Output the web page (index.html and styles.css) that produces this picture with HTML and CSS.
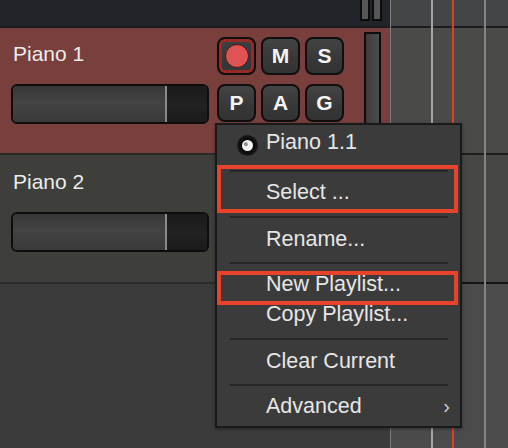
FILE: index.html
```html
<!DOCTYPE html>
<html>
<head>
<meta charset="utf-8">
<link rel="stylesheet" href="styles.css">
</head>
<body>
<div class="app">
  <div class="headers">
    <div class="topbar">
      <div class="mini-meters"><span class="mini"></span><span class="mini"></span></div>
    </div>
    <div class="track track-sel">
      <div class="track-main">
        <div class="name">Piano 1</div>
        <div class="fader"><div class="fader-fill"></div><div class="fader-thumb"></div><div class="fader-rest"></div></div>
      </div>
      <div class="btn-grid">
        <div class="btn rec"><span class="rec-dot"></span></div>
        <div class="btn">M</div>
        <div class="btn">S</div>
        <div class="btn">P</div>
        <div class="btn">A</div>
        <div class="btn">G</div>
      </div>
      <div class="meter"></div>
    </div>
    <div class="track track-2">
      <div class="track-main">
        <div class="name">Piano 2</div>
        <div class="fader"><div class="fader-fill"></div><div class="fader-thumb"></div><div class="fader-rest"></div></div>
      </div>
    </div>
    <div class="rest"></div>
  </div>
  <div class="timeline">
    <div class="tl-top"></div>
    <div class="tl-row1"></div>
    <div class="tl-row2"></div>
    <div class="tl-rest"></div>
    <div class="tl-lines">
      <span class="vl v0"></span>
      <span class="vl v1"></span>
      <span class="vl vred"></span>
      <span class="vl v2"></span>
    </div>
  </div>

  <div class="menu">
    <div class="item item-piano"><span class="radio"></span><span>Piano 1.1</span></div>
    <div class="sep"></div>
    <div class="item item-select">Select ...</div>
    <div class="sep"></div>
    <div class="item item-rename">Rename...</div>
    <div class="sep"></div>
    <div class="item item-new">New Playlist...</div>
    <div class="item item-copy">Copy Playlist...</div>
    <div class="sep"></div>
    <div class="item item-clear">Clear Current</div>
    <div class="sep"></div>
    <div class="item item-adv"><span>Advanced</span><span class="arrow">›</span></div>
  </div>
  <div class="hl hl1"></div>
  <div class="hl hl2"></div>
</div>
</body>
</html>
```
FILE: styles.css
```css
html, body {
  margin: 0;
  padding: 0;
  background: #3b3b3b;
}
.app {
  position: relative;
  display: flex;
  width: 508px;
  height: 448px;
  overflow: hidden;
  font-family: "Liberation Sans", Arial, sans-serif;
}
.headers {
  width: 390px;
  display: flex;
  flex-direction: column;
  flex-shrink: 0;
}
.topbar {
  height: 26px;
  border-bottom: 2px solid #1b1c1e;
  background: #212428;
  display: flex;
  justify-content: flex-end;
  padding-right: 8px;
  overflow: hidden;
}
.mini-meters {
  display: flex;
  gap: 2px;
  margin-top: -2px;
}
.mini {
  display: block;
  width: 6px;
  height: 19px;
  border: 2px solid #0c0c0c;
  background: #565656;
}
.track {
  display: flex;
  overflow: hidden;
  padding-left: 11px;
  border-bottom: 2px solid #2a2a2a;
}
.track-sel {
  height: 125px;
  background: #793f3d;
}
.track-2 {
  height: 127px;
  background: #3e3f3b;
}
.track-main {
  width: 198px;
  padding-top: 14px;
}
.track-2 .track-main {
  padding-top: 15px;
}
.name {
  font-size: 21px;
  line-height: 24px;
  height: 24px;
  color: #ececec;
  margin-left: 2px;
}
.fader {
  margin-top: 18px;
  height: 40px;
  box-sizing: border-box;
  border: 2px solid #0d0d0d;
  border-radius: 6px;
  display: flex;
  overflow: hidden;
}
.fader-fill {
  flex: 1;
  background: linear-gradient(#363636, #444 45%, #3a3a3a);
}
.fader-thumb {
  width: 2px;
  background: #8a8a8a;
}
.fader-rest {
  width: 40px;
  background: linear-gradient(#1a1a1a, #222 50%, #1b1b1b);
}
.btn-grid {
  display: grid;
  grid-template-columns: repeat(3, 39px);
  grid-auto-rows: 38px;
  column-gap: 5px;
  row-gap: 9px;
  margin-left: 8px;
  padding-top: 9px;
}
.btn {
  box-sizing: border-box;
  border: 2px solid #0f0f0f;
  border-radius: 8px;
  background: linear-gradient(#444, #373737 60%, #333);
  color: #f4f4f4;
  font-weight: bold;
  font-size: 21px;
  display: flex;
  align-items: center;
  justify-content: center;
}
.btn.rec {
  box-shadow: inset 0 0 0 3px #962a27;
  background: linear-gradient(#3e3e3e, #343434);
}
.rec-dot {
  width: 22px;
  height: 22px;
  border-radius: 50%;
  background: #df5453;
  border: 1px solid #4a1414;
}
.meter {
  margin-left: 20px;
  margin-top: 4px;
  width: 17px;
  height: 140px;
  box-sizing: border-box;
  border: 2px solid #0d0d0d;
  background: linear-gradient(90deg, #3c3c3c, #4c4c4c);
  flex-shrink: 0;
}
.rest {
  flex: 1;
  background: #3b3b3b;
}
.timeline {
  flex: 1;
  position: relative;
  display: flex;
  flex-direction: column;
}
.tl-top {
  height: 26px;
  background: #444547;
  border-bottom: 2px solid #1b1c1e;
}
.tl-row1 {
  height: 125px;
  background: #4a4b48;
  border-bottom: 2px solid #1d1e1c;
}
.tl-row2 {
  height: 127px;
  background: #474846;
  border-bottom: 2px solid #141414;
}
.tl-rest {
  flex: 1;
  background: #4b4b4b;
}
.tl-lines {
  position: absolute;
  inset: 0;
  pointer-events: none;
}
.vl {
  position: absolute;
  top: 0;
  bottom: 0;
  width: 1px;
}
.v0 { left: 0; background: #7d7d7d; }
.v1 { left: 41px; width: 2px; background: #a5a5a5; }
.vred { left: 62px; width: 2px; background: #d9412b; }
.v2 { left: 94px; width: 2px; background: #848484; }

.menu {
  position: absolute;
  left: 215px;
  top: 123px;
  width: 247px;
  height: 305px;
  box-sizing: border-box;
  border: 2px solid #1a1a1a;
  background: #3b3b3b;
  display: flex;
  flex-direction: column;
  color: #e6e6e6;
  font-size: 21.5px;
  box-shadow: 0 1px 3px rgba(0,0,0,0.4);
}
.item {
  box-sizing: border-box;
  display: flex;
  align-items: center;
  padding-left: 49px;
  white-space: nowrap;
}
.item-piano {
  height: 45px;
  padding-bottom: 10px;
  padding-left: 20px;
  gap: 8px;
}
.item-select { height: 44px; padding-bottom: 3px; }
.item-rename { height: 44px; padding-bottom: 2px; }
.item-new { height: 36px; padding-top: 4px; }
.item-copy { height: 38px; padding-bottom: 10px; }
.item-clear { height: 44px; padding-bottom: 2px; }
.item-adv {
  height: 40px;
  justify-content: space-between;
  padding-right: 10px;
}
.arrow {
  color: #cfcfcf;
  font-size: 20px;
}
.sep {
  height: 2px;
  background: #262626;
  margin: 0 12px 0 13px;
}
.radio {
  width: 21px;
  height: 21px;
  border-radius: 50%;
  background: radial-gradient(circle, #0c0c0c 50%, #333 100%);
  display: flex;
  align-items: center;
  justify-content: center;
  margin-top: 5px;
}
.radio::after {
  content: "";
  width: 11px;
  height: 11px;
  border-radius: 50%;
  background: radial-gradient(circle at 35% 38%, #8f8f8f 0 1.5px, #f3f3f3 2.5px);
}
.hl {
  position: absolute;
  box-sizing: border-box;
  border: 4px solid #e8432a;
  left: 217px;
  width: 241px;
}
.hl1 { top: 165px; height: 48px; }
.hl2 { top: 271px; height: 34px; }
```
